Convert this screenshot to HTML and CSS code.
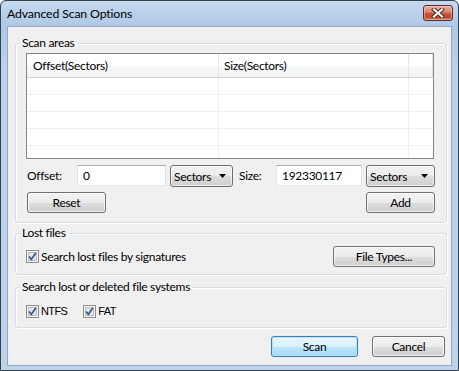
FILE: index.html
```html
<!DOCTYPE html>
<html>
<head>
<meta charset="utf-8">
<link rel="stylesheet" href="styles.css">
</head>
<body>
<div class="window">
  <div class="titlebar">
    <span class="title">Advanced Scan Options</span>
    <span class="close">
      <svg width="14" height="10" viewBox="0 0 14 10">
        <path d="M3 1.5 L11 8.5 M11 1.5 L3 8.5" stroke="#4a2019" stroke-width="4" stroke-linecap="square" fill="none"/>
        <path d="M3 1.5 L11 8.5 M11 1.5 L3 8.5" stroke="#ffffff" stroke-width="2.2" stroke-linecap="square" fill="none"/>
      </svg>
    </span>
  </div>
  <div class="client">
    <section class="group group-areas">
      <div class="group-title">Scan areas</div>
      <div class="listview">
        <div class="lv-header">
          <div class="lv-cell c1">Offset(Sectors)</div>
          <div class="lv-cell c2">Size(Sectors)</div>
          <div class="lv-cell c3"></div>
        </div>
        <div class="lv-body">
          <div class="lv-row"><div class="lv-cell c1"></div><div class="lv-cell c2"></div><div class="lv-cell c3"></div></div>
          <div class="lv-row"><div class="lv-cell c1"></div><div class="lv-cell c2"></div><div class="lv-cell c3"></div></div>
          <div class="lv-row"><div class="lv-cell c1"></div><div class="lv-cell c2"></div><div class="lv-cell c3"></div></div>
          <div class="lv-row"><div class="lv-cell c1"></div><div class="lv-cell c2"></div><div class="lv-cell c3"></div></div>
          <div class="lv-row"><div class="lv-cell c1"></div><div class="lv-cell c2"></div><div class="lv-cell c3"></div></div>
        </div>
      </div>
      <div class="field-row">
        <span class="lbl lbl-offset">Offset:</span>
        <span class="input in-offset">0</span>
        <span class="combo combo-offset">Sectors<svg class="arrow" width="7" height="4" viewBox="0 0 7 4"><path d="M0 0 H7 L3.5 4 Z" fill="#000"/></svg></span>
        <span class="lbl lbl-size">Size:</span>
        <span class="input in-size">192330117</span>
        <span class="combo combo-size">Sectors<svg class="arrow" width="7" height="4" viewBox="0 0 7 4"><path d="M0 0 H7 L3.5 4 Z" fill="#000"/></svg></span>
      </div>
      <div class="btn-row">
        <button class="btn btn-reset">Reset</button>
        <button class="btn btn-add">Add</button>
      </div>
    </section>

    <section class="group group-lost">
      <div class="group-title">Lost files</div>
      <div class="lost-row">
        <span class="check">
          <svg width="13" height="13" viewBox="0 0 13 13"><rect x="0.5" y="0.5" width="12" height="12" fill="#f6f6f6" stroke="#8e8f8f"/><rect x="2.5" y="2.5" width="8" height="8" fill="#e2e5ea" stroke="#b9bec6"/><path d="M3.2 6.6 L5.3 9.4 L9.8 3" stroke="#3c5285" stroke-width="1.7" fill="none"/></svg>
          <span class="check-text">Search lost files by signatures</span>
        </span>
        <button class="btn btn-types">File Types...</button>
      </div>
    </section>

    <section class="group group-fs">
      <div class="group-title">Search lost or deleted file systems</div>
      <div class="fs-row">
        <span class="check">
          <svg width="13" height="13" viewBox="0 0 13 13"><rect x="0.5" y="0.5" width="12" height="12" fill="#f6f6f6" stroke="#8e8f8f"/><rect x="2.5" y="2.5" width="8" height="8" fill="#e2e5ea" stroke="#b9bec6"/><path d="M3.2 6.6 L5.3 9.4 L9.8 3" stroke="#3c5285" stroke-width="1.7" fill="none"/></svg>
          <span class="check-text fs-text">NTFS</span>
        </span>
        <span class="check">
          <svg width="13" height="13" viewBox="0 0 13 13"><rect x="0.5" y="0.5" width="12" height="12" fill="#f6f6f6" stroke="#8e8f8f"/><rect x="2.5" y="2.5" width="8" height="8" fill="#e2e5ea" stroke="#b9bec6"/><path d="M3.2 6.6 L5.3 9.4 L9.8 3" stroke="#3c5285" stroke-width="1.7" fill="none"/></svg>
          <span class="check-text fs-text">FAT</span>
        </span>
      </div>
    </section>

    <div class="footer">
      <button class="btn btn-default btn-scan">Scan</button>
      <button class="btn btn-cancel">Cancel</button>
    </div>
  </div>
</div>
</body>
</html>
```

FILE: styles.css
```css
* { box-sizing: border-box; }

body {
  margin: 0;
  background: #ffffff;
  font-family: "Lato", "Noto Sans", sans-serif;
  font-size: 12px;
  letter-spacing: -0.3px;
  color: #000;
}

.window {
  width: 459px;
  height: 371px;
  border: 1px solid #34414e;
  border-radius: 6px 6px 0 0;
  background: linear-gradient(#c6d9ef 0px, #aec8e6 26px, #b9d1ea 60px, #bcd3ea 100%);
  display: flex;
  flex-direction: column;
  overflow: hidden;
}

.titlebar {
  height: 25px;
  flex: none;
  display: flex;
  align-items: flex-start;
  padding-left: 6px;
}

.title {
  margin-top: 5px;
  line-height: 16px;
  font-size: 12.3px;
  letter-spacing: -0.15px;
  color: #000;
}

.close {
  margin-left: auto;
  margin-right: 5px;
  margin-top: 4px;
  width: 30px;
  height: 16px;
  border: 1px solid #5e2c25;
  border-radius: 3px;
  background: linear-gradient(#e9ada2 0%, #d9897a 40%, #c8543e 55%, #c24a33 80%, #d37b66 100%);
  box-shadow: inset 0 0 0 1px rgba(255, 255, 255, 0.35);
  display: flex;
  align-items: center;
  justify-content: center;
}

.client {
  flex: 1;
  margin: 0 6px 4px;
  border: 1px solid #93a9c2;
  background: #f0f0f0;
  display: flex;
  flex-direction: column;
}

.group {
  border: 1px solid #d5dfe5;
  border-radius: 3px;
  box-shadow: inset 1px 1px 0 #fff, 1px 1px 0 #fff;
  padding: 0 11px 9px 10px;
  display: flex;
  flex-direction: column;
  margin: 0 4px 0 7px;
}

.group-areas { margin-top: 16px; }
.group-lost { margin-top: 10px; padding-bottom: 7px; }
.group-fs { margin-top: 12px; padding-bottom: 8px; }

.group-title {
  align-self: flex-start;
  margin: -9px 0 0 -6px;
  padding: 0 2px;
  background: #f0f0f0;
  line-height: 16px;
  height: 16px;
}

/* list view */
.listview {
  margin-top: 2px;
  margin-right: 1px;
  height: 106px;
  border: 1px solid #828790;
  background: #fff;
  overflow: hidden;
}

.lv-header {
  display: flex;
  height: 24px;
  border-bottom: 1px solid #d5d5d5;
  background: linear-gradient(#ffffff 0%, #ffffff 50%, #f7f8fa 51%, #f2f3f5 100%);
}

.lv-header .lv-cell {
  line-height: 23px;
  border-right: 1px solid #e5e5e5;
  white-space: nowrap;
  overflow: hidden;
}

.lv-header .c1 { padding-left: 6px; }
.lv-header .c2 { padding-left: 5px; }

.c1 { width: 192px; flex: none; }
.c2 { width: 190px; flex: none; }
.c3 { flex: 1; }

.lv-row {
  display: flex;
  height: 17px;
  border-bottom: 1px solid #f0f0f0;
}

.lv-row .lv-cell { border-right: 1px solid #f0f0f0; }
.lv-row .c3 { border-right: none; }

/* input row */
.field-row {
  margin-top: 6px;
  display: flex;
  align-items: flex-start;
  height: 22px;
}

.lbl {
  line-height: 21px;
  flex: none;
}
.lbl-offset { width: 51px; padding-left: 1px; }
.lbl-size { width: 37px; margin-left: 6px; }

.input {
  height: 21px;
  flex: none;
  background: #fff;
  border: 1px solid;
  border-color: #abadb3 #dbdfe6 #e3e9ef #e2e3ea;
  padding-left: 5px;
  line-height: 19px;
}
.in-offset { width: 89px; }
.in-size { width: 86px; }

.combo {
  height: 22px;
  flex: none;
  margin-left: 4px;
  display: flex;
  align-items: center;
  padding-left: 3px;
  border: 1px solid #707070;
  border-radius: 3px;
  background: linear-gradient(#f2f2f2 0%, #ebebeb 50%, #dddddd 51%, #cfcfcf 100%);
  box-shadow: inset 0 0 0 1px rgba(255, 255, 255, 0.6);
}
.combo-offset { width: 63px; }
.combo-size { width: 69px; }

.arrow {
  margin-left: auto;
  margin-right: 6px;
}

/* buttons */
.btn {
  height: 21px;
  padding: 0;
  font-family: inherit;
  font-size: 12px;
  letter-spacing: inherit;
  color: #000;
  border: 1px solid #707070;
  border-radius: 3px;
  background: linear-gradient(#f2f2f2 0%, #ebebeb 50%, #dddddd 51%, #cfcfcf 100%);
  box-shadow: inset 0 0 0 1px rgba(255, 255, 255, 0.7);
  line-height: 19px;
  text-align: center;
}

.btn-row {
  margin-top: 5px;
  display: flex;
  justify-content: space-between;
}
.btn-reset { width: 79px; margin-left: 1px; }
.btn-add { width: 69px; }

.lost-row {
  margin-top: 5px;
  display: flex;
  align-items: center;
  justify-content: space-between;
}
.btn-types { width: 102px; }

.check {
  display: flex;
  align-items: center;
}
.check svg { flex: none; }
.check-text {
  margin-left: 2px;
  line-height: 16px;
}

.fs-row {
  margin-top: 8px;
  height: 16px;
  display: flex;
  align-items: center;
  gap: 16px;
}
.fs-text {
  font-family: "Liberation Sans", Arial, sans-serif;
  font-size: 11px;
  letter-spacing: -0.6px;
}

.footer {
  margin-top: 8px;
  margin-right: 6px;
  display: flex;
  justify-content: flex-end;
  gap: 14px;
}
.btn-scan { width: 87px; }
.btn-cancel { width: 73px; }

.btn-default {
  border-color: #3c7fb1;
  background: linear-gradient(#eaf6fd 0%, #d9f0fc 50%, #bee6fd 51%, #a7d9f5 100%);
  box-shadow: inset 0 0 0 1px #b6e3fb, 0 0 1px #7fc4ee;
}
```
